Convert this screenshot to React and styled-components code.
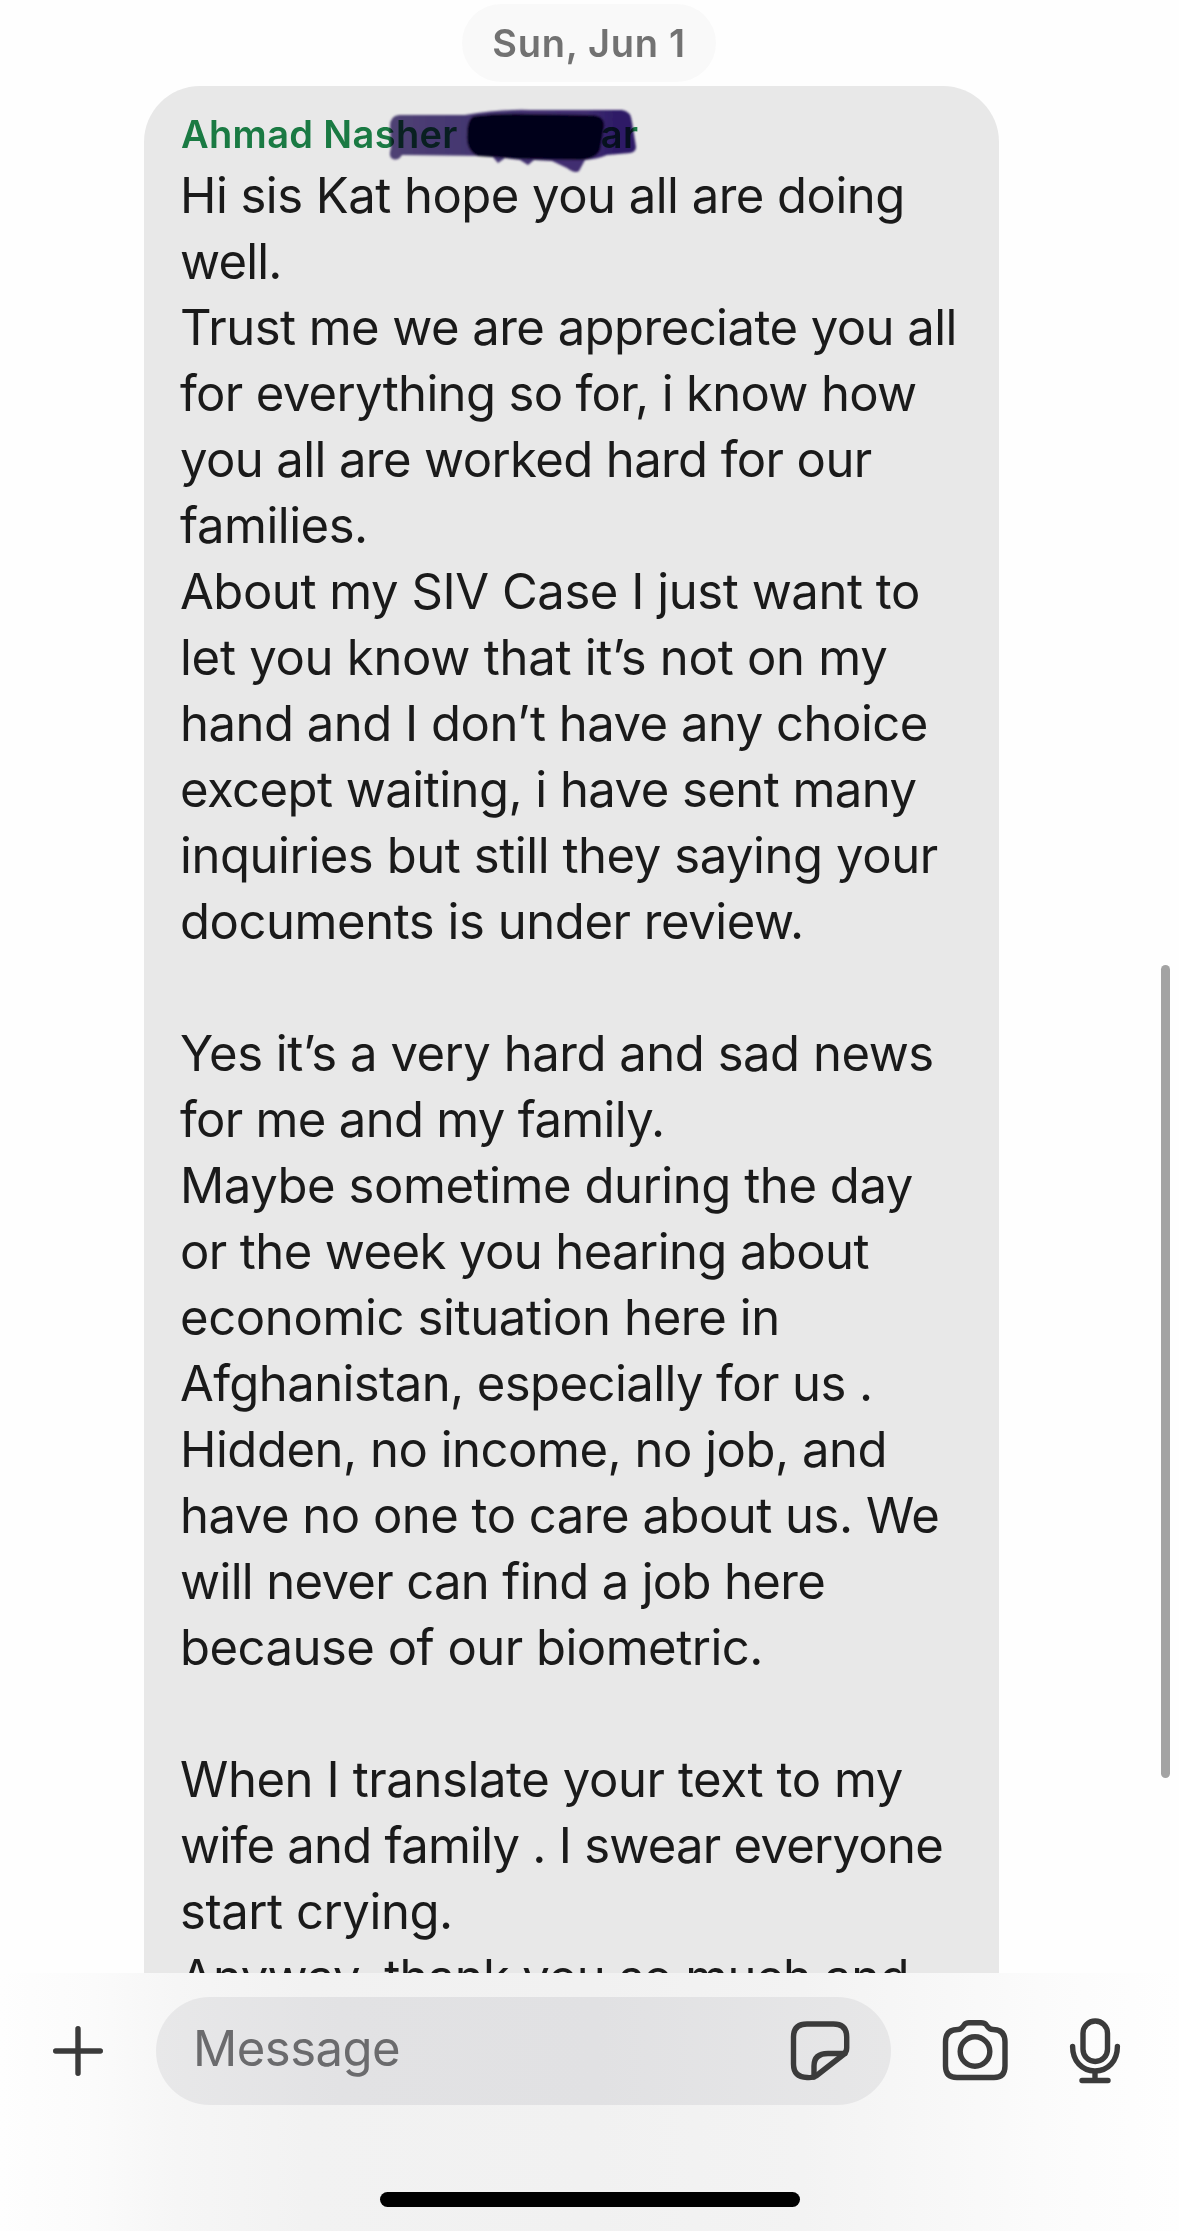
import React from "react";
import styled, { createGlobalStyle } from "styled-components";

const GlobalStyle = createGlobalStyle`
  body {
    margin: 0;
    background: #fefefe;
    font-family: Inter, "Liberation Sans", sans-serif;
  }
`;

const Screen = styled.div`
  position: relative;
  display: flex;
  flex-direction: column;
  width: 1179px;
  height: 2231px;
  overflow: hidden;
`;

const Thread = styled.main`
  height: 1973px;
  overflow: hidden;
`;

const DateChip = styled.div`
  width: 254px;
  height: 78px;
  margin: 4px 0 4px 462px;
  border-radius: 39px;
  background: #f9f9f9;
  color: #727272;
  font-size: 38px;
  font-weight: 600;
  letter-spacing: 0.7px;
  line-height: 78px;
  text-align: center;
`;

const Bubble = styled.article`
  box-sizing: border-box;
  width: 855px;
  height: 2000px;
  margin-left: 144px;
  padding: 25px 36px;
  border-radius: 56px;
  background: #e8e8e8;
`;

const Sender = styled.header`
  position: relative;
  display: flex;
  height: 52px;
  padding-left: 1px;
  color: #1a7a43;
  font-size: 38px;
  font-weight: 600;
  letter-spacing: 0.35px;
  line-height: 46px;
  white-space: pre;
`;

const SenderEnd = styled.span`
  margin-left: 143px;
`;

const Scribble = styled.svg`
  position: absolute;
  left: 200px;
  top: -11px;
  mix-blend-mode: multiply;
`;

const Line = styled.p`
  height: 66px;
  margin: 0;
  color: #1a1a1a;
  font-size: 49px;
  line-height: 66px;
  white-space: pre;
  letter-spacing: ${(props) => props.$track || 0}px;
`;

const ScrollThumb = styled.div`
  position: absolute;
  left: 1161px;
  top: 965px;
  width: 9px;
  height: 813px;
  border-radius: 5px;
  background: #a3a3a3;
`;

const Composer = styled.footer`
  display: flex;
  flex-direction: column;
  align-items: center;
  height: 258px;
  background: linear-gradient(
    90deg,
    #fefefe 0%,
    #fbfbfb 8%,
    #f6f6f6 15%,
    #f2f2f2 26%,
    #f1f1f1 50%,
    #f3f3f3 68%,
    #f7f7f7 78%,
    #fbfbfb 88%,
    #fefefe 100%
  );
`;

const Controls = styled.div`
  display: flex;
  align-items: center;
  width: 1179px;
  height: 108px;
  margin-top: 24px;
`;

const Field = styled.div`
  box-sizing: border-box;
  display: flex;
  align-items: center;
  justify-content: space-between;
  width: 735px;
  height: 108px;
  margin-left: 50px;
  padding: 0 38px 0 37px;
  border-radius: 54px;
  background: linear-gradient(90deg, #e8e8e9 0%, #e2e2e4 25%, #e1e1e3 60%, #e7e7e8 100%);
`;

const Placeholder = styled.span`
  padding-bottom: 4px;
  color: #6b6b6d;
  font-size: 49px;
  line-height: 60px;
  letter-spacing: -0.5px;
`;

const Icon = styled.svg`
  display: block;
  flex: none;
  margin-left: ${(props) => props.$gap || 0}px;
  fill: none;
  stroke: #3b3b3b;
  stroke-width: 5.4;
  stroke-linecap: round;
  stroke-linejoin: round;
`;

const HomeIndicator = styled.div`
  width: 420px;
  height: 15px;
  margin-top: 87px;
  border-radius: 8px;
  background: #000;
`;

// each line carries its own tracking
const message = [
  ["Hi sis Kat hope you all are doing", -0.52],
  ["well.", -0.8],
  ["Trust me we are appreciate you all", -0.54],
  ["for everything so for, i know how", -0.65],
  ["you all are worked hard for our", -0.6],
  ["families.", -0.47],
  ["About my SIV Case I just want to", -0.44],
  ["let you know that it’s not on my", -0.27],
  ["hand and I don’t have any choice", -0.49],
  ["except waiting, i have sent many", -0.53],
  ["inquiries but still they saying your", -0.43],
  ["documents is under review.", -0.44],
  ["", 0],
  ["Yes it’s a very hard and sad news", -0.47],
  ["for me and my family.", -0.68],
  ["Maybe sometime during the day", -0.44],
  ["or the week you hearing about", -0.59],
  ["economic situation here in", -0.37],
  ["Afghanistan, especially for us .", -0.58],
  ["Hidden, no income, no job, and", -0.47],
  ["have no one to care about us. We", -0.49],
  ["will never can find a job here", -0.66],
  ["because of our biometric.", -0.51],
  ["", 0],
  ["When I translate your text to my", -0.4],
  ["wife and family . I swear everyone", -0.75],
  ["start crying.", -0.44],
  ["Anyway, thank you so much and", -0.69],
];

const Redaction = () => (
  <Scribble width="270" height="75" viewBox="380 100 270 75">
    <defs>
      <linearGradient id="marker" x1="0" x2="1" y1="0" y2="0">
        <stop offset="0" stopColor="#55477f" />
        <stop offset="0.35" stopColor="#4b3a7c" />
        <stop offset="0.8" stopColor="#46317c" />
        <stop offset="0.92" stopColor="#311d70" />
      </linearGradient>
      <filter id="soft" x="-5%" y="-10%" width="110%" height="120%">
        <feGaussianBlur stdDeviation="1.3" />
      </filter>
    </defs>
    <g filter="url(#soft)">
      <path
        d="M399 115 L465 115 Q500 109 530 110 L622 110 Q631 111 632 122 L636 147 Q636 152 630 153 L607 155 Q598 159 585 160 L579 171 Q575 174 567 168 L552 161 L534 160 L528 165 L520 160 L505 158 L498 163 L492 156 L402 155 Q398 161 393 159 Q388 157 391 148 L390 126 Q390 116 399 115 Z"
        fill="url(#marker)"
      />
      <path
        d="M474 116 Q500 113 530 114 L592 115 Q606 116 604 128 L600 150 Q596 159 580 160 L520 159 L478 156 Q466 151 467 135 Q467 119 474 116 Z"
        fill="#04001c"
      />
    </g>
  </Scribble>
);

export default function App() {
  return (
    <Screen>
      <GlobalStyle />
      <Thread>
        <DateChip>Sun, Jun 1</DateChip>
        <Bubble>
          <Sender>
            <span>Ahmad Nasher</span>
            <SenderEnd>ar</SenderEnd>
            <Redaction />
          </Sender>
          {message.map(([text, track], i) => (
            <Line key={i} $track={track}>
              {text}
            </Line>
          ))}
        </Bubble>
      </Thread>
      <ScrollThumb />
      <Composer>
        <Controls>
          <Icon $gap={50} width="56" height="56" viewBox="50 2023 56 56">
            <path d="M55.7 2051H100.3M78 2028.700V2073.300" />
          </Icon>
          <Field>
            <Placeholder>Message</Placeholder>
            <Icon width="66" height="66" viewBox="786 2018 66 66">
              <path d="M806 2024H832.500Q845.700 2024 845.700 2037V2048Q845.700 2052 842.500 2054.500L815 2076Q811.500 2078 806 2077.500Q792.500 2077 792.500 2064V2037Q792.500 2024 806 2024Z" />
              <path d="M844 2053.500H827Q813 2053.500 813 2066V2077" />
            </Icon>
          </Field>
          <Icon $gap={49} width="72" height="66" viewBox="940 2018 72 66">
            <path d="M958 2029.500Q961 2029.500 963 2026.500L964.500 2024.500Q966 2022.700 969 2022.700H981Q984.500 2022.700 986 2024.500L987.500 2026.500Q989.500 2029.500 993 2029.500Q1005 2029.500 1005 2042V2066Q1005 2077.500 994 2077.500H957Q945.500 2077.500 945.500 2066V2042Q945.500 2029.500 958 2029.500Z" />
            <circle cx="975" cy="2051.500" r="14.800" />
          </Icon>
          <Icon $gap={55} width="56" height="72" viewBox="1067 2015 56 72">
            <rect x="1083" y="2021" width="24.500" height="40.500" rx="12.250" />
            <path d="M1072.600 2046.500C1072.600 2061 1082 2071 1095 2071S1117.400 2061 1117.400 2046.500M1095 2071V2080.500M1082 2080.500H1108" />
          </Icon>
        </Controls>
        <HomeIndicator />
      </Composer>
    </Screen>
  );
}
